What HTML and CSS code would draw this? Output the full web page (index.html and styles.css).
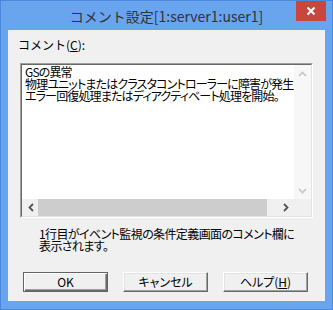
FILE: index.html
```html
<!DOCTYPE html>
<html lang="ja">
<head>
    <meta charset="UTF-8">
    <title>コメント設定</title>
    <link rel="stylesheet" href="styles.css">
</head>
<body>
    <div class="window">
        <div class="titlebar">
            <span class="title">コメント設定[1:server1:user1]</span>
            <div class="close">
                <svg width="10" height="10" viewBox="0 0 10 10">
                    <path d="M1.5 1.5 L8.5 8.5 M8.5 1.5 L1.5 8.5" stroke="#fff" stroke-width="2" fill="none"/>
                </svg>
            </div>
        </div>

        <div class="client">
            <div class="label">コメント(<u>C</u>):</div>

            <div class="editbox">
                <div class="editbox-inner">
                    <div class="edit-text">GSの異常
物理ユニットまたはクラスタコントローラーに障害が発生
エラー回復処理またはディアクティベート処理を開始。</div>
                    <div class="vscroll">
                        <svg width="9" height="6" viewBox="0 0 9 6"><path d="M1 5 L4.5 1.5 L8 5" stroke="#c4c4c4" stroke-width="1.6" fill="none"/></svg>
                        <svg width="9" height="6" viewBox="0 0 9 6"><path d="M1 1 L4.5 4.5 L8 1" stroke="#c4c4c4" stroke-width="1.6" fill="none"/></svg>
                    </div>
                    <div class="hscroll">
                        <div class="harrow">
                            <svg width="6" height="9" viewBox="0 0 6 9"><path d="M5 1 L1.5 4.5 L5 8" stroke="#555" stroke-width="1.8" fill="none"/></svg>
                        </div>
                        <div class="htrack"><div class="hthumb"></div></div>
                        <div class="harrow">
                            <svg width="6" height="9" viewBox="0 0 6 9"><path d="M1 1 L4.5 4.5 L1 8" stroke="#555" stroke-width="1.8" fill="none"/></svg>
                        </div>
                    </div>
                    <div class="corner"></div>
                </div>
            </div>

            <div class="note">1行目がイベント監視の条件定義画面のコメント欄に<br>表示されます。</div>

            <div class="buttons">
                <button class="btn default">OK</button>
                <button class="btn">キャンセル</button>
                <button class="btn">ヘルプ(<u>H</u>)</button>
            </div>
        </div>
    </div>
</body>
</html>
```

FILE: styles.css
```css
/* Dialog frame */
body {
    margin: 0;
    font-family: "Noto Sans CJK JP", sans-serif;
}

.window {
    width: 333px;
    height: 310px;
    box-sizing: border-box;
    background: #69a4ee;
    border: 1px solid #4a88dc;
    display: flex;
    flex-direction: column;
}

.titlebar {
    position: relative;
    height: 29px;
    display: flex;
    align-items: center;
    justify-content: center;
}

.title {
    font-size: 14px;
    color: #333;
    padding-top: 1px;
}

.close {
    position: absolute;
    top: 0;
    right: 6px;
    width: 30px;
    height: 20px;
    background: #c7463e;
    display: flex;
    align-items: center;
    justify-content: center;
}

.client {
    margin: 0 7px;
    height: 271px;
    background: #f0f0f0;
    display: flex;
    flex-direction: column;
    font-size: 12px;
    line-height: 12px;
    color: #000;
}

.label {
    margin: 9px 0 0 10px;
}

/* Comment edit box */
.editbox {
    margin: 12px 0 0 12px;
    width: 293px;
    height: 155px;
    box-sizing: border-box;
    border: 1px solid;
    border-color: #a0a0a0 #fff #fff #a0a0a0;
}

.editbox-inner {
    height: 100%;
    box-sizing: border-box;
    border: 1px solid;
    border-color: #696969 #e3e3e3 #e3e3e3 #696969;
    background: #fff;
    display: grid;
    grid-template-columns: 1fr 17px;
    grid-template-rows: 1fr 17px;
}

.edit-text {
    padding: 1px 0 0 3px;
    white-space: pre;
    overflow: hidden;
    font-feature-settings: "palt";
    letter-spacing: -0.85px;
}

.vscroll {
    background: #f7f7f7;
    display: flex;
    flex-direction: column;
    justify-content: space-between;
    align-items: center;
    padding: 6px 0 5px;
}

.hscroll {
    display: flex;
    background: #f0f0f0;
}

.harrow {
    width: 17px;
    display: flex;
    align-items: center;
    justify-content: center;
}

.htrack {
    flex: 1;
    padding-right: 10px;
    display: flex;
}

.hthumb {
    flex: 1;
    background: #cdcdcd;
    margin-left: -1px;
}

.corner {
    background: #f0f0f0;
}

.note {
    margin: 10px 0 0 31px;
    font-feature-settings: "palt";
    letter-spacing: -0.6px;
    white-space: nowrap;
}

/* Buttons */
.buttons {
    margin: 20px 0 0 15px;
    display: flex;
    gap: 15px;
}

.btn {
    width: 85px;
    height: 20px;
    box-sizing: border-box;
    padding: 0;
    font-family: inherit;
    font-size: 12px;
    line-height: 12px;
    color: #000;
    background: #f0f0f0;
    border: 1px solid;
    border-color: #fff #696969 #696969 #fff;
    box-shadow: inset -1px -1px #a0a0a0, inset 1px 1px #e3e3e3;
    font-feature-settings: "palt";
}

.btn.default {
    border: 1px solid #646464;
    box-shadow: inset 1px 1px #fff, inset -1px -1px #696969, inset -2px -2px #a0a0a0;
}
```
